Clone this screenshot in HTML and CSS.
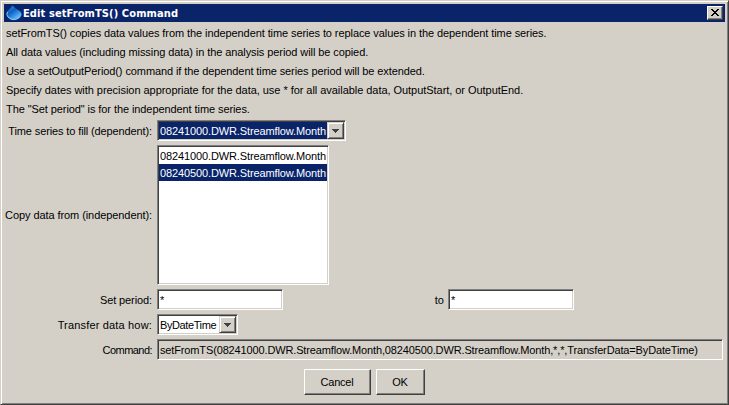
FILE: index.html
```
<!DOCTYPE html>
<html lang="en">
<head>
<meta charset="utf-8">
<title>Edit setFromTS() Command</title>
<link rel="stylesheet" href="styles.css">
</head>
<body>
<div class="window">
  <header class="titlebar">
    <svg class="app-icon" width="16" height="16" viewBox="0 0 16 16">
      <defs><linearGradient id="drop" x1="0.2" y1="0.1" x2="0.8" y2="0.9"><stop offset="0" stop-color="#2c80d0"/><stop offset=".35" stop-color="#1060c0"/><stop offset=".65" stop-color="#3090e8"/><stop offset="1" stop-color="#80c4f8"/></linearGradient></defs>
      <path d="M6.500 .5Q9 3.500 13 5.500Q16 7.500 15.500 10Q14 14 9.500 15Q4 15.500 1.500 12Q-.5 9 1.200 6.500Q4 4 6.500 .5Z" fill="url(#drop)"/>
      <path d="M1.500 7Q0 9.500 2 12Q4.500 14.800 8.500 14.700" fill="none" stroke="#a8d4f0" stroke-width=".8"/>
    </svg>
    <h1 class="title">Edit setFromTS() Command</h1>
    <button class="close" aria-label="Close"><svg width="8" height="7" viewBox="0 0 8 7" shape-rendering="crispEdges"><path d="M0 0h2v1h1v1h2v-1h1v-1h2v1h-1v1h-1v1h-1v1h1v1h1v1h1v1h-2v-1h-1v-1h-2v1h-1v1h-2v-1h1v-1h1v-1h1v-1h-1v-1h-1v-1h-1z"/></svg></button>
  </header>
  <main class="content">
    <p class="note">setFromTS() copies data values from the independent time series to replace values in the dependent time series.</p>
    <p class="note">All data values (including missing data) in the analysis period will be copied.</p>
    <p class="note note-output">Use a setOutputPeriod() command if the dependent time series period will be extended.</p>
    <p class="note note-dates">Specify dates with precision appropriate for the data, use * for all available data, OutputStart, or OutputEnd.</p>
    <p class="note">The "Set period" is for the independent time series.</p>
    <div class="form">
      <label class="label label-fill">Time series to fill (dependent):</label>
      <div class="sunken combo combo-wide"><span class="value series selected">08241000.DWR.Streamflow.Month</span><span class="arrow"><svg width="7" height="4" viewBox="0 0 7 4" shape-rendering="crispEdges"><path d="M0 0h7v1h-1v1h-1v1h-1v1h-1v-1h-1v-1h-1v-1h-1z"/></svg></span></div>
      <label class="label label-copy">Copy data from (independent):</label>
      <div class="sunken list"><div class="item series">08241000.DWR.Streamflow.Month</div><div class="item series selected">08240500.DWR.Streamflow.Month</div></div>
      <label class="label label-period">Set period:</label>
      <div class="period"><div class="sunken field">*</div><span class="to">to</span><div class="sunken field">*</div></div>
      <label class="label label-transfer">Transfer data how:</label>
      <div class="sunken combo combo-narrow"><span class="value how">ByDateTime</span><span class="arrow"><svg width="7" height="4" viewBox="0 0 7 4" shape-rendering="crispEdges"><path d="M0 0h7v1h-1v1h-1v1h-1v1h-1v-1h-1v-1h-1v-1h-1z"/></svg></span></div>
      <label class="label label-command">Command:</label>
      <div class="sunken command">setFromTS(08241000.DWR.Streamflow.Month,08240500.DWR.Streamflow.Month,*,*,TransferData=ByDateTime)</div>
    </div>
    <footer class="actions"><button class="button cancel">Cancel</button><button class="button ok">OK</button></footer>
  </main>
</div>
</body>
</html>
```
FILE: styles.css
```
* { box-sizing: border-box; }
body { margin: 0; font: 11px/19px "Liberation Sans", Arial, sans-serif; color: #000; background: #d4d0c8; }
.window { width: 729px; height: 405px; padding: 3px; background: #d4d0c8; border: 1px solid; border-color: #d4d0c8 #404040 #404040 #d4d0c8; box-shadow: inset 1px 1px #fff, inset -1px -1px #808080; }
.titlebar { display: flex; align-items: center; height: 18px; background: #0a246a; padding: 0 2px; }
.app-icon { flex: none; }
.title { margin: 0 0 0 1px; flex: 1; font: bold 11px/18px "DejaVu Sans Condensed", "Noto Sans", sans-serif; letter-spacing: .1px; height: 18px; padding-top: 1px; color: #fff; white-space: nowrap; }
.close { display: flex; align-items: center; justify-content: center; width: 16px; height: 14px; padding: 0 1px 1px 0; background: #d4d0c8; border: 1px solid; border-color: #fff #404040 #404040 #fff; box-shadow: inset -1px -1px #808080; }
.content { padding: 2px 2px 0; }
.note { margin: 0; height: 19px; line-height: 19px; letter-spacing: -.083px; white-space: nowrap; }
.note-output { letter-spacing: -.095px; }
.note-dates { letter-spacing: -.045px; }
.form { display: grid; grid-template-columns: 146px 566px; column-gap: 5px; row-gap: 4px; padding-top: 1px; align-items: center; }
.label { display: flex; justify-content: flex-end; height: 17px; white-space: nowrap; }
.label-fill { letter-spacing: -.12px; }
.label-copy { letter-spacing: -.08px; line-height: 17px; }
.label-period { letter-spacing: -.1px; }
.label-transfer { letter-spacing: .17px; }
.label-command { letter-spacing: -.55px; }
.sunken { height: 21px; background: #fff; border: 1px solid; border-color: #808080 #fff #fff #808080; box-shadow: inset 1px 1px #404040, inset -1px -1px #d4d0c8; padding: 1px; white-space: nowrap; }
.combo { display: flex; }
.combo-wide { width: 189px; }
.combo-narrow { width: 81px; }
.value { flex: 1; min-width: 0; height: 17px; padding-left: 1px; }
.series { letter-spacing: -.12px; }
.how { letter-spacing: -.4px; }
.selected { background: #0a246a; color: #fff; }
.arrow { flex: none; display: flex; width: 17px; height: 17px; align-items: center; justify-content: center; background: #d4d0c8; border: 1px solid; border-color: #d4d0c8 #404040 #404040 #d4d0c8; box-shadow: inset 1px 1px #fff, inset -1px -1px #808080; fill: #404040; }
.list { width: 172px; height: 140px; }
.item { height: 17px; padding-left: 1px; }
.period { display: flex; align-items: center; }
.field { width: 126px; padding-left: 2px; }
.to { width: 165px; height: 17px; padding-right: 4px; text-align: right; }
.command { width: 566px; padding-left: 2px; background: #d4d0c8; letter-spacing: -.14px; }
.actions { display: flex; justify-content: center; gap: 5px; margin-top: 9px; padding-right: 1px; }
.button { height: 26px; padding: 0; font: 11px/17px "Liberation Sans", Arial, sans-serif; color: #000; background: #d4d0c8; border: 1px solid; border-color: #fff #404040 #404040 #fff; box-shadow: inset -1px -1px #808080; letter-spacing: -.2px; }
.cancel { width: 67px; }
.ok { width: 49px; }
```
